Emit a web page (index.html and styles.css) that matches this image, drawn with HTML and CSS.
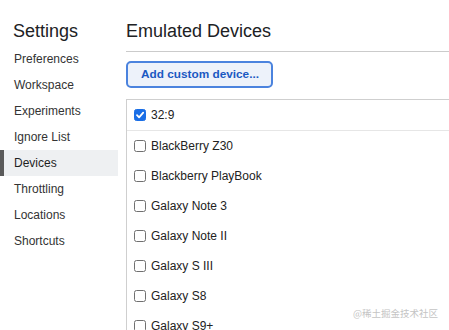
FILE: index.html
```html
<!DOCTYPE html>
<html lang="en">
<head>
<meta charset="utf-8">
<title>Settings</title>
<link rel="stylesheet" href="styles.css">
</head>
<body>
<div class="app">
  <nav class="sidebar">
    <h1 class="sidebar-title">Settings</h1>
    <ul class="tabs">
      <li class="tab">Preferences</li>
      <li class="tab">Workspace</li>
      <li class="tab">Experiments</li>
      <li class="tab">Ignore List</li>
      <li class="tab tab-selected">Devices</li>
      <li class="tab">Throttling</li>
      <li class="tab">Locations</li>
      <li class="tab">Shortcuts</li>
    </ul>
  </nav>
  <main class="content">
    <h2 class="content-title">Emulated Devices</h2>
    <button class="add-button" type="button">Add custom device...</button>
    <div class="device-list">
      <div class="device device-custom">
        <span class="check check-on"><svg viewBox="0 0 12 12" width="12" height="12"><path d="M3 6.2 L5.1 8.3 L9.2 3.6" fill="none" stroke="#fff" stroke-width="1.8" stroke-linecap="round" stroke-linejoin="round"/></svg></span>
        <span class="device-name">32:9</span>
      </div>
      <div class="device"><span class="check"></span><span class="device-name">BlackBerry Z30</span></div>
      <div class="device"><span class="check"></span><span class="device-name">Blackberry PlayBook</span></div>
      <div class="device"><span class="check"></span><span class="device-name">Galaxy Note 3</span></div>
      <div class="device"><span class="check"></span><span class="device-name">Galaxy Note II</span></div>
      <div class="device"><span class="check"></span><span class="device-name">Galaxy S III</span></div>
      <div class="device"><span class="check"></span><span class="device-name">Galaxy S8</span></div>
      <div class="device"><span class="check"></span><span class="device-name">Galaxy S9+</span></div>
    </div>
  </main>
</div>
<div class="watermark">@稀土掘金技术社区</div>
</body>
</html>
```
FILE: styles.css
```css
html, body {
  margin: 0;
  padding: 0;
  background: #fff;
  height: 100%;
  overflow: hidden;
}
body {
  font-family: "Liberation Sans", Arial, sans-serif;
  color: #222;
}
.app {
  display: flex;
  height: 330px;
}
.sidebar {
  width: 118px;
  flex: none;
}
.sidebar-title {
  margin: 0;
  padding: 20px 0 4px 13px;
  font-size: 18px;
  line-height: 22px;
  font-weight: normal;
  color: #202124;
}
.tabs {
  list-style: none;
  margin: 0;
  padding: 0;
}
.tab {
  height: 26px;
  line-height: 26px;
  padding-left: 14px;
  font-size: 12px;
  color: #333;
}
.tab-selected {
  background: #eef0f2;
  box-shadow: inset 4px 0 0 #5a5a5a;
  color: #1f1f1f;
}
.content {
  flex: 1;
  padding-left: 8px;
  display: flex;
  flex-direction: column;
  align-items: flex-start;
}
.content-title {
  align-self: stretch;
  margin: 0;
  padding: 20px 0 9px 0;
  font-size: 18px;
  line-height: 22px;
  font-weight: normal;
  color: #202124;
  border-bottom: 1px solid #cbcbcb;
}
.add-button {
  margin-top: 9px;
  height: 27px;
  padding: 0 12px 0 13px;
  border: 2px solid #4b83de;
  border-radius: 5px;
  background: #edf2fa;
  color: #1b59c2;
  font-family: "Liberation Sans", Arial, sans-serif;
  font-size: 11.8px;
  font-weight: bold;
  line-height: 23px;
}
.device-list {
  align-self: stretch;
  margin-top: 11px;
  border-top: 1px solid #cfcfcf;
  border-left: 1px solid #cfcfcf;
}
.device {
  display: flex;
  align-items: center;
  gap: 5px;
  height: 30px;
  padding-left: 7px;
  font-size: 12px;
  color: #222;
}
.device-custom {
  border-bottom: 1px solid #e6e6e6;
}
.check {
  width: 12px;
  height: 12px;
  box-sizing: border-box;
  border: 1px solid #707070;
  border-radius: 2.5px;
  background: #fff;
  flex: none;
  display: flex;
}
.check-on {
  background: #1a6ee6;
  border-color: #1a6ee6;
}
.check-on svg {
  margin: -1px;
}
.watermark {
  position: absolute;
  right: 11px;
  bottom: 10px;
  font-family: "Noto Sans CJK SC", sans-serif;
  font-size: 9.5px;
  color: #c4c4c4;
}
```
